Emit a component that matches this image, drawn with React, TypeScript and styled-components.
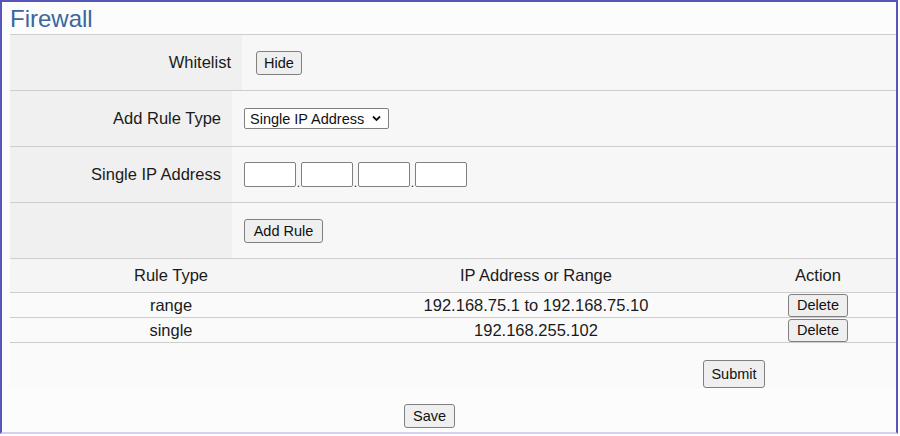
import React from 'react';
import styled, {createGlobalStyle} from 'styled-components';

const GlobalStyle = createGlobalStyle`
  body {
    margin: 0;
    background: #ffffff;
    font-family: "Liberation Sans", Arial, sans-serif;
    color: #1a1a1a;
  }
`;

const Frame = styled.div`
  width: 898px;
  height: 434px;
  box-sizing: border-box;
  border: 2px solid #5656b8;
  border-bottom-color: #d2d2ee;
  padding-left: 8px;
  background: #fcfcfc;
  display: flex;
  flex-direction: column;
`;

const Title = styled.h1`
  margin: 0;
  height: 32px;
  line-height: 34px;
  font-size: 24px;
  font-weight: normal;
  color: #3a679f;
  border-bottom: 1px solid #cdcdcd;
`;

const FormRow = styled.div<{ $label: number }>`
  display: grid;
  grid-template-columns: ${p => p.$label}px 1fr;
  height: 56px;
  box-sizing: border-box;
  border-bottom: 1px solid #cdcdcd;
`;

const LabelCell = styled.div`
  background: #f0f0f0;
  display: flex;
  align-items: center;
  justify-content: flex-end;
  padding-right: 11px;
  font-size: 16.5px;
`;

const ValueCell = styled.div<{ $pad?: number }>`
  background: #f7f7f7;
  display: flex;
  align-items: center;
  padding-left: ${p => p.$pad ?? 12}px;
`;

const Button = styled.button<{ $w: number; $h: number }>`
  width: ${p => p.$w}px;
  height: ${p => p.$h}px;
  padding: 0;
  font-family: "Liberation Sans", Arial, sans-serif;
  font-size: 14.5px;
  color: #111;
  background: #efefef;
  border: 1px solid #808080;
  border-radius: 3px;
`;

const SelectWrap = styled.div`
  position: relative;
  width: 145px;
  height: 21px;
`;

const Select = styled.select`
  appearance: none;
  width: 100%;
  height: 100%;
  box-sizing: border-box;
  padding: 0 0 0 5px;
  font-family: "Liberation Sans", Arial, sans-serif;
  font-size: 14.5px;
  color: #111;
  background: #fff;
  border: 1px solid #808080;
  border-radius: 2px;
`;

const Chevron = styled.svg`
  position: absolute;
  right: 8px;
  top: 7px;
  pointer-events: none;
`;

const IpGroup = styled.div`
  display: flex;
  align-items: flex-end;
`;

const IpBox = styled.input`
  width: 52px;
  height: 25px;
  box-sizing: border-box;
  border: 1px solid #808080;
  border-radius: 2px;
  background: #fff;
`;

const Dot = styled.span`
  width: 5px;
  text-align: center;
  font-size: 12px;
  line-height: 8px;
`;

const TableRow = styled.div<{ $h: number; $head?: boolean }>`
  display: grid;
  grid-template-columns: 322px 408px 1fr;
  height: ${p => p.$h}px;
  box-sizing: border-box;
  border-bottom: 1px solid #cdcdcd;
  background: ${p => (p.$head ? '#f5f5f5' : '#fafafa')};
  font-size: 16.5px;
`;

const TableCell = styled.div`
  display: flex;
  align-items: center;
  justify-content: center;
`;

const ActionBar = styled.div<{ $h: number; $top: number; $left: number; $bg: string }>`
  height: ${p => p.$h}px;
  padding-top: ${p => p.$top}px;
  padding-left: ${p => p.$left}px;
  box-sizing: border-box;
  background: ${p => p.$bg};
`;

const rules = [
    {type: 'range', ip: '192.168.75.1 to 192.168.75.10'},
    {type: 'single', ip: '192.168.255.102'},
];

const App = () => {
    return <>
        <GlobalStyle/>
        <Frame>
            <Title>Firewall</Title>
            <FormRow $label={232}>
                <LabelCell>Whitelist</LabelCell>
                <ValueCell $pad={14}>
                    <Button $w={46} $h={24}>Hide</Button>
                </ValueCell>
            </FormRow>
            <FormRow $label={222}>
                <LabelCell>Add Rule Type</LabelCell>
                <ValueCell>
                    <SelectWrap>
                        <Select defaultValue="single">
                            <option value="single">Single IP Address</option>
                            <option value="range">IP Range</option>
                        </Select>
                        <Chevron width="9" height="7" viewBox="0 0 9 7">
                            <path d="M1 1.5 L4.5 5 L8 1.5" fill="none" stroke="#111" strokeWidth="1.8"/>
                        </Chevron>
                    </SelectWrap>
                </ValueCell>
            </FormRow>
            <FormRow $label={222}>
                <LabelCell>Single IP Address</LabelCell>
                <ValueCell>
                    <IpGroup>
                        {[0, 1, 2, 3].map(i => (
                            <React.Fragment key={i}>
                                {i > 0 && <Dot>.</Dot>}
                                <IpBox/>
                            </React.Fragment>
                        ))}
                    </IpGroup>
                </ValueCell>
            </FormRow>
            <FormRow $label={222}>
                <LabelCell/>
                <ValueCell>
                    <Button $w={79} $h={24}>Add Rule</Button>
                </ValueCell>
            </FormRow>
            <TableRow $h={34} $head>
                <TableCell>Rule Type</TableCell>
                <TableCell>IP Address or Range</TableCell>
                <TableCell>Action</TableCell>
            </TableRow>
            {rules.map(rule => (
                <TableRow $h={25} key={rule.ip}>
                    <TableCell>{rule.type}</TableCell>
                    <TableCell>{rule.ip}</TableCell>
                    <TableCell>
                        <Button $w={60} $h={23}>Delete</Button>
                    </TableCell>
                </TableRow>
            ))}
            <ActionBar $h={45} $top={17} $left={693} $bg="#fafafa">
                <Button $w={62} $h={28}>Submit</Button>
            </ActionBar>
            <ActionBar $h={43} $top={16} $left={394} $bg="#fcfcfc">
                <Button $w={51} $h={24}>Save</Button>
            </ActionBar>
        </Frame>
    </>;
};

export default App;
